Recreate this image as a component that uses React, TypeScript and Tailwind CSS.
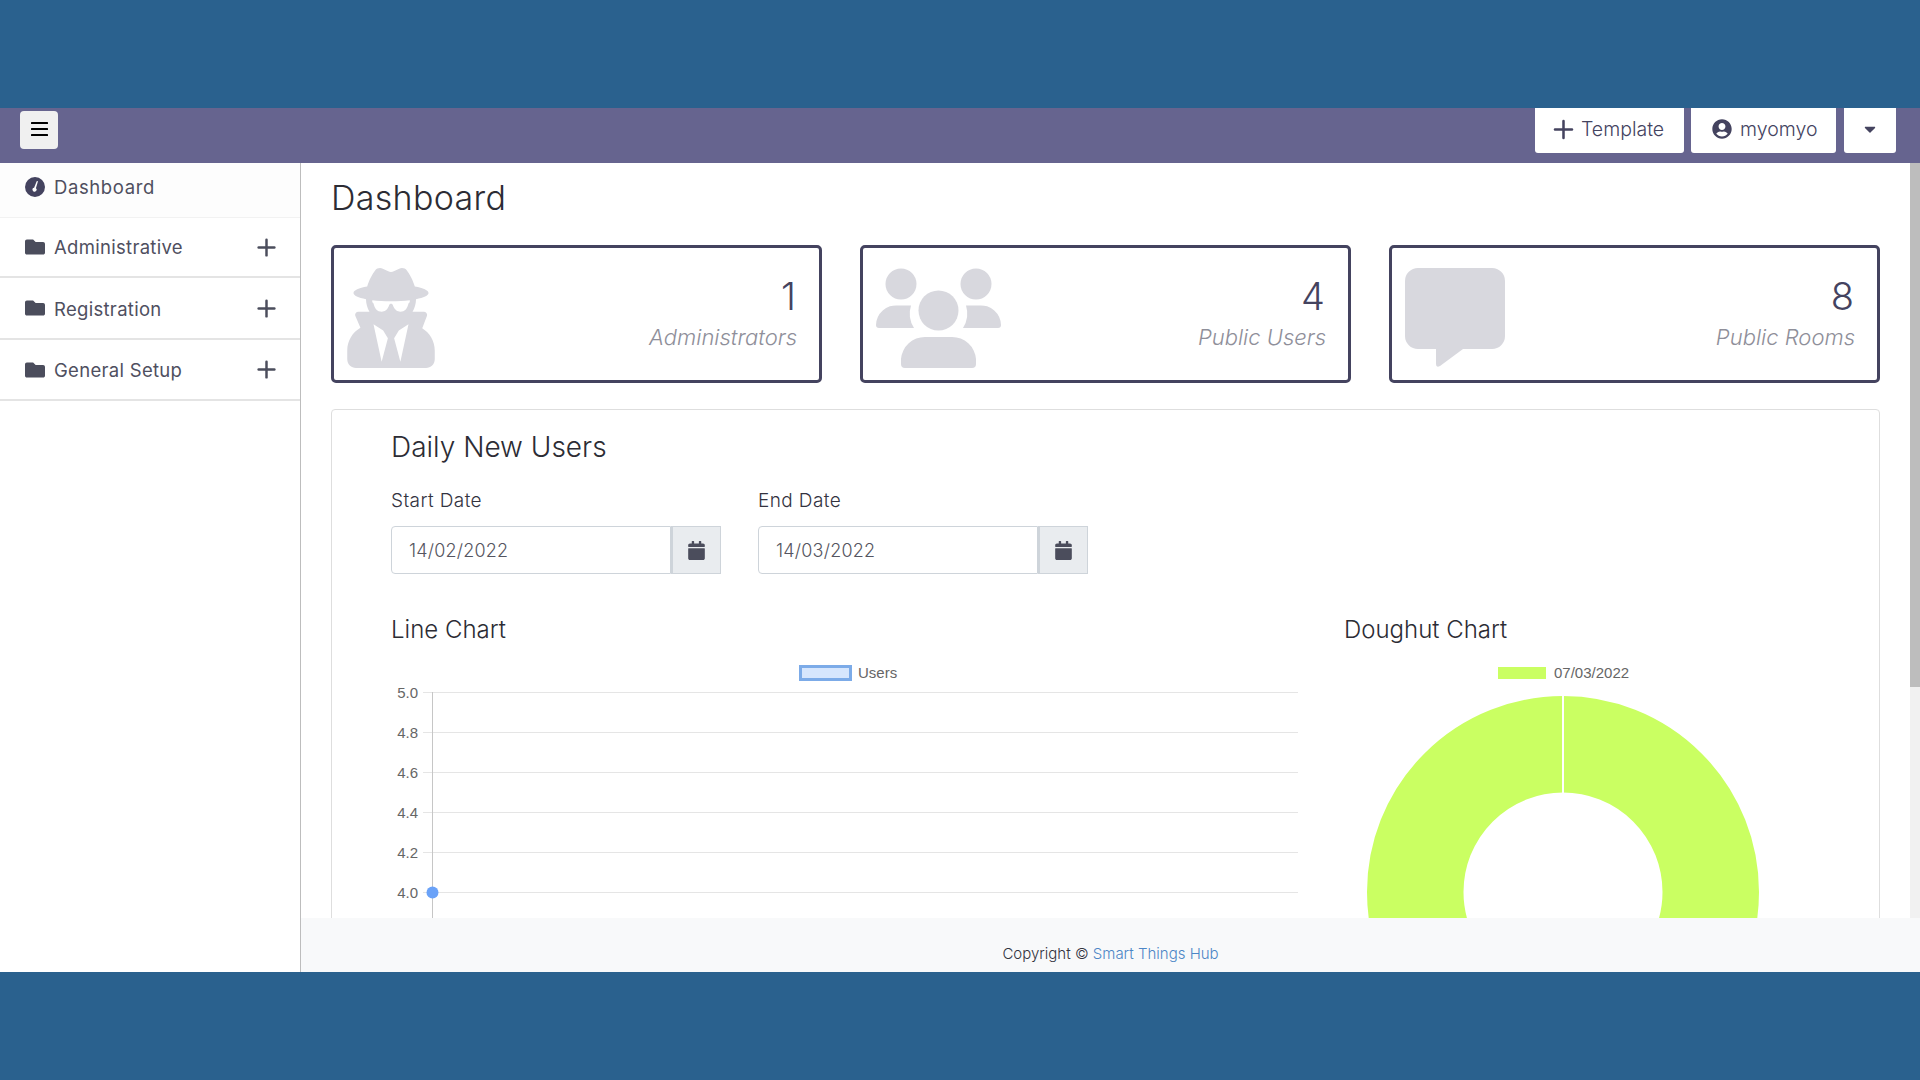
import React from "react";
import { FaCalendar, FaCaretDown, FaFolder, FaUserCircle, FaUserSecret } from "react-icons/fa";
import { Plus } from "lucide-react";

const GaugeIcon = () => (
  <svg viewBox="0 0 20 20" className="w-[20px] h-[20px] text-[#44435f]" fill="currentColor">
    <path fillRule="evenodd" d="M10 0a10 10 0 1 0 0 20 10 10 0 0 0 0-20zM12.9 4.6 10.9 11.2a2 2 0 1 1-1.8-.5l2.6-6.4a.65.65 0 0 1 1.2.3z" />
  </svg>
);

const BarsIcon = () => (
  <svg viewBox="0 0 17 14" className="w-[17px] h-[14px] mb-[3px] text-black" fill="currentColor">
    <rect y="0" width="17" height="2" rx="0.5" />
    <rect y="6" width="17" height="2" rx="0.5" />
    <rect y="12" width="17" height="2" rx="0.5" />
  </svg>
);

const PeopleIcon = () => (
  <svg viewBox="0 0 125 100" className="w-[125px] h-[100px] text-[#d8d8de]" fill="currentColor">
    <circle cx="25" cy="16" r="15.5" />
    <circle cx="100" cy="16" r="15.5" />
    <circle cx="62.5" cy="42.5" r="20" />
    <path d="M0 57a20 20 0 0 1 22-19.500h13a27 27 0 0 0 3 22.500H3a3 3 0 0 1-3-3z" />
    <path d="M125 57a3 3 0 0 1-3 3H87a27 27 0 0 0 3-22.500h13a20 20 0 0 1 22 19.500z" />
    <path d="M25 91a24 24 0 0 1 24-22h27a24 24 0 0 1 24 22v5a4 4 0 0 1-4 4H29a4 4 0 0 1-4-4z" />
  </svg>
);

const BubbleIcon = () => (
  <svg viewBox="0 0 100 100" className="w-[100px] h-[100px] text-[#d8d8de]" fill="currentColor">
    <path d="M13 0h74a13 13 0 0 1 13 13v55a13 13 0 0 1-13 13H58L35 98q-4 2-4-2V81H13A13 13 0 0 1 0 68V13A13 13 0 0 1 13 0z" />
  </svg>
);

const NavRow = ({ label, h, shift }: { label: string; h: string; shift: string }) => (
  <div className={`flex items-center justify-between pl-[25px] pr-[21px] border-b-2 border-[#e4e4e4] ${h}`}>
    <div className="flex items-center gap-[9px]">
      <FaFolder className="w-[20px] h-[20px] text-[#4b4d5c]" />
      <span className={`text-[18.500px] tracking-[0.3px] text-[#4f4f5f] ${shift}`}>{label}</span>
    </div>
    <Plus className="w-[27px] h-[27px] text-[#4b4d5c] -mr-[1px]" strokeWidth={2.2} />
  </div>
);

const StatCard = ({ icon, value, label }: { icon: React.ReactNode; value: string; label: string }) => (
  <div className="flex-1 h-[138px] border-[3px] border-[#44435f] rounded-[5px] flex items-center justify-between pl-[13px] pr-[22px]">
    <div className="flex items-center h-[100px] mt-[8px]">{icon}</div>
    <div className="text-right -mt-[4px]">
      <div className="text-[38px] leading-[46px] font-light text-[#44435f] pr-[1px]">{value}</div>
      <div className="text-[22px] leading-[30px] mt-[3px] italic font-light text-[#8f8f9a]">{label}</div>
    </div>
  </div>
);

const DateField = ({ label, value }: { label: string; value: string }) => (
  <div className="w-[330px]">
    <div className="text-[19px] tracking-[0.4px] leading-[26px] font-light text-[#33333f] mb-[12px]">{label}</div>
    <div className="flex h-[48px]">
      <div className="w-[280px] flex items-center px-[17px] text-[18px] tracking-[0.2px] font-light text-[#555560] border border-[#ced4da] rounded-l-[4px]">{value}</div>
      <div className="w-[50px] flex items-center justify-center bg-[#e9ecef] border border-l-2 border-[#ced4da]">
        <FaCalendar className="w-[17px] h-[19px] text-[#4b4d5c]" />
      </div>
    </div>
  </div>
);

const LineChart = () => {
  const ticks = ["5.0", "4.8", "4.6", "4.4", "4.2", "4.0"];
  return (
    <svg viewBox="0 0 908 270" className="w-[908px] h-[270px] block font-['Liberation_Sans',Arial,sans-serif]">
      <rect x="409.500" y="2.500" width="50" height="13" fill="#d6e6fd" stroke="#7cabe8" strokeWidth="3" />
      <text x="467" y="14" fontSize="15" fill="#666">Users</text>
      {ticks.map((t, i) => (
        <g key={t}>
          <line x1="32" x2="907" y1={28.5 + i * 40} y2={28.5 + i * 40} stroke="#e5e5e5" />
          <text x="27" y={33.5 + i * 40} fontSize="15" fill="#666" textAnchor="end">{t}</text>
        </g>
      ))}
      <line x1="41.500" x2="41.500" y1="28" y2="270" stroke="#c6c6c6" />
      <circle cx="41.500" cy="228.500" r="6" fill="#6aa2f8" />
    </svg>
  );
};

const DonutChart = () => (
  <svg viewBox="0 0 440 270" className="w-[440px] h-[270px] block font-['Liberation_Sans',Arial,sans-serif]">
    <rect x="154" y="3" width="48" height="12" fill="#caff62" />
    <text x="210" y="14" fontSize="15" fill="#666">07/03/2022</text>
    <circle cx="219" cy="228" r="147.750" fill="none" stroke="#caff62" strokeWidth="96.500" />
    <rect x="218" y="30" width="2" height="100" fill="#fff" />
  </svg>
);

export default function App() {
  return (
    <div className="w-full h-screen flex flex-col bg-[#2a618e] overflow-hidden font-['Inter',sans-serif]">
      <div className="h-[108px] shrink-0" />
      <div className="h-[55px] shrink-0 bg-[#66648f] flex items-start justify-between pl-[20px] pr-[24px]">
        <button className="w-[38px] h-[38px] mt-[3px] bg-[#f0f0f0] rounded-[4px] flex items-center justify-center">
          <BarsIcon />
        </button>
        <div className="flex gap-[7px] text-[19.500px] font-light text-[#44435f]">
          <div className="w-[149px] h-[45px] pl-[14px] bg-white rounded-b-[3px] flex items-center gap-[3px]">
            <Plus className="w-[29px] h-[29px] mb-[2px]" strokeWidth={2.1} />
            <span className="pb-[2px]">Template</span>
          </div>
          <div className="w-[145px] h-[45px] pl-[21px] bg-white rounded-b-[3px] flex items-center gap-[8px]">
            <FaUserCircle className="w-[20px] h-[20px] mb-[3px]" />
            <span className="pb-[2px]">myomyo</span>
          </div>
          <div className="w-[52px] h-[45px] ml-[1px] bg-white rounded-b-[3px] flex items-center justify-center">
            <FaCaretDown className="w-[16px] h-[18px] mb-[3px]" />
          </div>
        </div>
      </div>
      <div className="h-[809px] shrink-0 flex bg-white">
        <aside className="w-[301px] shrink-0 border-r border-[#bdbdbd]">
          <div className="h-[55px] flex items-center gap-[9px] pl-[25px] pb-[6px] bg-[#fdfdfd] border-b border-[#f2f2f2]">
            <GaugeIcon />
            <span className="text-[18.500px] tracking-[0.6px] text-[#4f4f5f] pt-[2px]">Dashboard</span>
          </div>
          <NavRow label="Administrative" h="h-[60px]" shift="pt-[1px]" />
          <NavRow label="Registration" h="h-[62px]" shift="pt-[3px]" />
          <NavRow label="General Setup" h="h-[61px]" shift="pt-[2px]" />
        </aside>
        <div className="flex-1 min-w-0 flex flex-col">
          <div className="h-[755px] flex">
            <main className="flex-1 min-w-0 overflow-hidden pl-[30px] pr-[30px]">
              <h1 className="text-[34px] tracking-[0.3px] leading-[40px] font-light text-[#2c2c34] pt-[15px] h-[82px]">Dashboard</h1>
              <div className="flex gap-[38px]">
                <StatCard icon={<FaUserSecret className="w-[88px] h-[100px] text-[#d8d8de]" />} value="1" label="Administrators" />
                <StatCard icon={<PeopleIcon />} value="4" label="Public Users" />
                <StatCard icon={<BubbleIcon />} value="8" label="Public Rooms" />
              </div>
              <section className="mt-[26px] border border-[#dedede] rounded-[4px] pl-[59px] pt-[19px]">
                <h2 className="text-[28px] leading-[36px] font-light text-[#2c2c34]">Daily New Users</h2>
                <div className="flex gap-[37px] mt-[23px]">
                  <DateField label="Start Date" value="14/02/2022" />
                  <DateField label="End Date" value="14/03/2022" />
                </div>
                <div className="flex mt-[40px]">
                  <div className="w-[953px]">
                    <h3 className="text-[24px] leading-[32px] font-light text-[#2c2c34] mb-[18px]">Line Chart</h3>
                    <LineChart />
                  </div>
                  <div>
                    <h3 className="text-[24px] leading-[32px] font-light text-[#2c2c34] mb-[18px]">Doughut Chart</h3>
                    <DonutChart />
                  </div>
                </div>
              </section>
            </main>
            <div className="w-[10px] shrink-0 bg-[#f1f1f1]">
              <div className="h-[524px] bg-[#bdbdbd]" />
            </div>
          </div>
          <footer className="h-[54px] bg-[#f8f9fa] flex items-end justify-center pb-[7px] text-[15px] font-light text-[#33333f]">
            <span>Copyright © <span className="text-[#4c86c6]">Smart Things Hub</span></span>
          </footer>
        </div>
      </div>
      <div className="flex-1" />
    </div>
  );
}
